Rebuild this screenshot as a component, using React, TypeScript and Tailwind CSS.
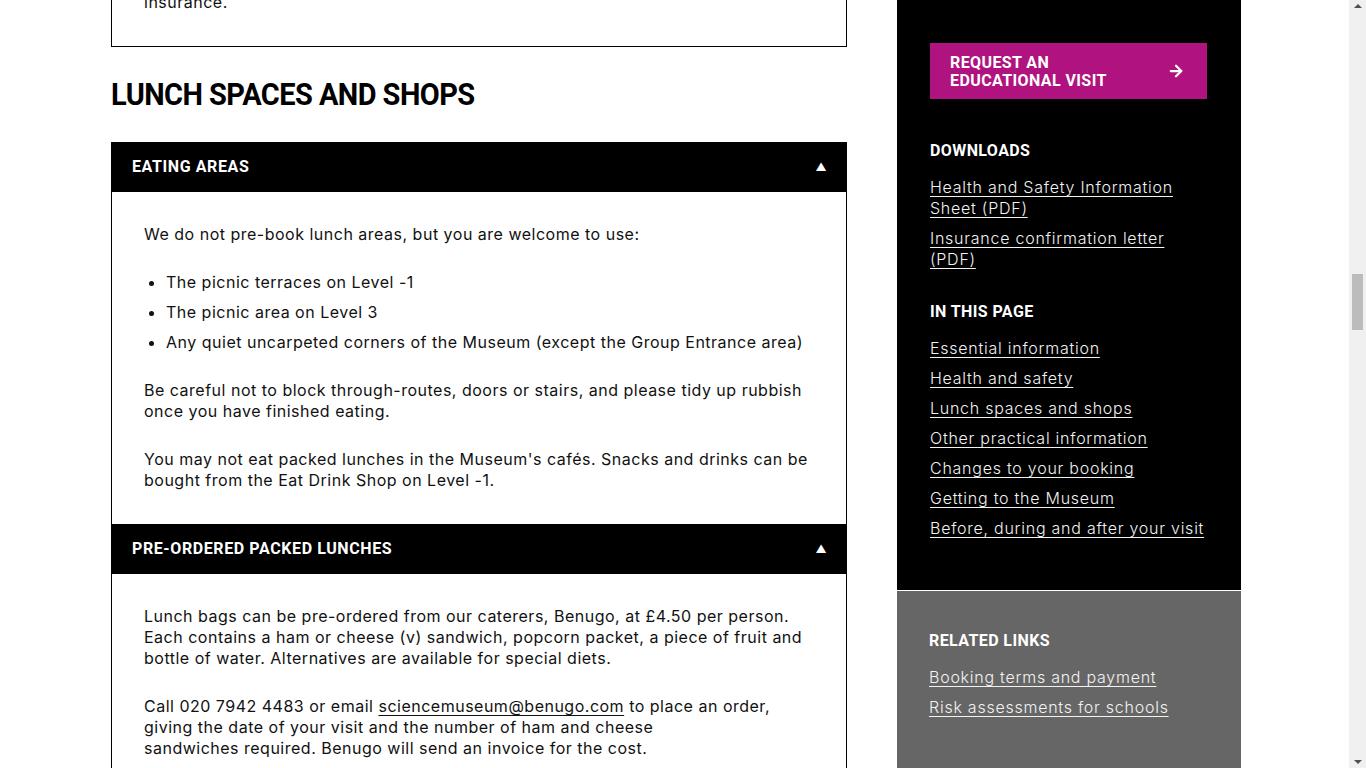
import { ArrowRight } from "lucide-react";

const bodyFont = "font-['Inter','Noto_Sans',sans-serif]";
const headFont = "font-['Roboto','Liberation_Sans',sans-serif]";

const inThisPage = [
  "Essential information",
  "Health and safety",
  "Lunch spaces and shops",
  "Other practical information",
  "Changes to your booking",
  "Getting to the Museum",
  "Before, during and after your visit",
];

const AccordionHeader = ({ title }: { title: string }) => (
  <div className="flex h-[50px] items-center justify-between bg-black pl-[21px] pr-[20px] text-white">
    <span className={`${headFont} text-[16px] font-bold uppercase tracking-[0.6px]`}>{title}</span>
    <span className="text-[11px] leading-none">▲</span>
  </div>
);

const FakeScrollbar = () => (
  <div className="flex w-[17px] shrink-0 flex-col items-center bg-[#f0f0f0]">
    <div className="mt-[4px] h-0 w-0 border-x-[4px] border-b-[4px] border-x-transparent border-b-[#505050]" />
    <div className="h-[266px]" />
    <div className="h-[56px] w-[11px] bg-[#bcbcbc]" />
    <div className="flex-1" />
    <div className="mb-[4px] h-0 w-0 border-x-[4px] border-t-[4px] border-x-transparent border-t-[#505050]" />
  </div>
);

export default function App() {
  return (
    <div className={`flex h-[768px] overflow-hidden bg-white text-[16px] tracking-[0.5px] text-[#111] ${bodyFont}`}>
      <div className="flex flex-1 gap-[50px] pl-[111px]">
        {/* main column */}
        <main className="w-[736px] shrink-0">
          <div className="flex h-[47px] flex-col border-x border-b border-black px-[32px]">
            <p className="-mt-[8px] leading-[21px]">insurance.</p>
          </div>

          <h2 className={`${headFont} mt-[29px] mb-[30px] origin-left scale-x-[0.905] text-[32px] font-bold uppercase leading-[36px] tracking-[-0.6px] text-black`}>
            Lunch spaces and shops
          </h2>

          <AccordionHeader title="Eating areas" />
          <div className="border-x border-black px-[32px] pt-[32px] pb-[33px] leading-[21px]">
            <p>We do not pre-book lunch areas, but you are welcome to use:</p>
            <ul className="mt-[27px] list-disc space-y-[9px] pl-[22px]">
              <li>The picnic terraces on Level -1</li>
              <li>The picnic area on Level 3</li>
              <li>Any quiet uncarpeted corners of the Museum (except the Group Entrance area)</li>
            </ul>
            <p className="mt-[27px]">
              Be careful not to block through-routes, doors or stairs, and please tidy up rubbish once you have finished eating.
            </p>
            <p className="mt-[27px]">
              You may not eat packed lunches in the Museum's cafés. Snacks and drinks can be bought from the Eat Drink Shop on Level -1.
            </p>
          </div>

          <AccordionHeader title="Pre-ordered packed lunches" />
          <div className="border-x border-black px-[32px] pt-[32px] pb-[33px] leading-[21px]">
            <p>
              Lunch bags can be pre-ordered from our caterers, Benugo, at £4.50 per person. Each contains a ham or cheese (v) sandwich, popcorn packet, a piece of fruit and bottle of water. Alternatives are available for special diets.
            </p>
            <p className="mt-[27px]">
              Call 020 7942 4483 or email <span className="underline underline-offset-[3px]">sciencemuseum@benugo.com</span> to place an order, giving the date of your visit and the number of ham and cheese
              <br />
              sandwiches required. Benugo will send an invoice for the cost.
            </p>
          </div>
        </main>

        {/* sidebar */}
        <aside className="flex w-[344px] shrink-0 flex-col text-[#f2f2f2]">
          <div className="bg-black px-[33px] pt-[43px] pb-[51px]">
            <div className="flex h-[56px] w-[277px] items-center justify-between bg-[#b0127f] pl-[20px] pr-[22px] text-white">
              <span className={`${headFont} pt-px text-[16px] font-bold uppercase leading-[18px] tracking-[0.4px]`}>
                Request an
                <br />
                educational visit
              </span>
              <ArrowRight className="h-[18px] w-[18px]" strokeWidth={3} />
            </div>

            <h3 className={`${headFont} mt-[42px] text-[16px] font-bold uppercase leading-[20px] tracking-[0.4px] text-white`}>Downloads</h3>
            <ul className="mt-[16px] space-y-[9px] font-light leading-[21px] tracking-[0.75px]">
              <li className="w-[260px] underline underline-offset-[3px]">Health and Safety Information Sheet (PDF)</li>
              <li className="w-[260px] underline underline-offset-[3px]">Insurance confirmation letter (PDF)</li>
            </ul>

            <h3 className={`${headFont} mt-[32px] text-[16px] font-bold uppercase leading-[20px] tracking-[0.4px] text-white`}>In this page</h3>
            <ul className="mt-[16px] space-y-[9px] font-light leading-[21px] tracking-[0.75px]">
              {inThisPage.map((item) => (
                <li key={item} className="underline underline-offset-[3px]">
                  {item}
                </li>
              ))}
            </ul>
          </div>
          <div className="h-px bg-white" />
          <div className="flex-1 bg-[#666666] px-[32px] pt-[40px]">
            <h3 className={`${headFont} text-[16px] font-bold uppercase leading-[20px] tracking-[0.4px] text-white`}>Related links</h3>
            <ul className="mt-[16px] space-y-[9px] font-light leading-[21px] tracking-[0.75px]">
              <li className="underline underline-offset-[3px]">Booking terms and payment</li>
              <li className="underline underline-offset-[3px]">Risk assessments for schools</li>
            </ul>
          </div>
        </aside>
      </div>
      <FakeScrollbar />
    </div>
  );
}
